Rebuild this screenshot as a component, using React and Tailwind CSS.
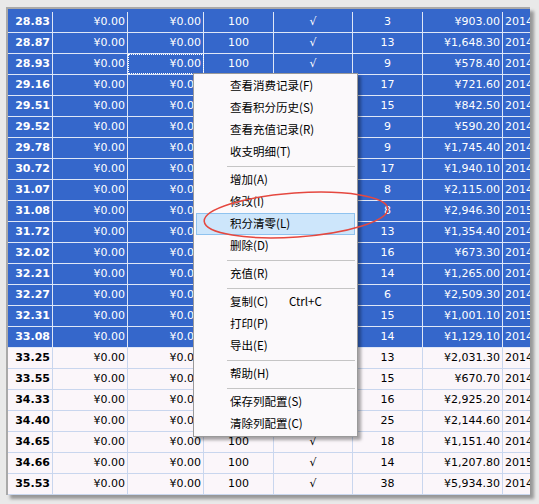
import React from "react";

const rows = [
  ["28.83", "3", "¥903.00", "2014", true],
  ["28.87", "13", "¥1,648.30", "2014", true],
  ["28.93", "9", "¥578.40", "2014", true],
  ["29.16", "17", "¥721.60", "2014", true],
  ["29.51", "15", "¥842.50", "2014", true],
  ["29.52", "9", "¥590.20", "2014", true],
  ["29.78", "9", "¥1,745.40", "2014", true],
  ["30.72", "17", "¥1,940.10", "2014", true],
  ["31.07", "8", "¥2,115.00", "2014", true],
  ["31.08", "8", "¥2,946.30", "2015", true],
  ["31.72", "13", "¥1,354.40", "2014", true],
  ["32.02", "16", "¥673.30", "2014", true],
  ["32.21", "14", "¥1,265.00", "2014", true],
  ["32.27", "6", "¥2,509.30", "2014", true],
  ["32.31", "15", "¥1,001.10", "2015", true],
  ["33.08", "14", "¥1,129.10", "2014", true],
  ["33.25", "13", "¥2,031.30", "2014", false],
  ["33.55", "15", "¥670.70", "2014", false],
  ["34.33", "16", "¥2,925.20", "2014", false],
  ["34.40", "25", "¥2,144.60", "2014", false],
  ["34.65", "18", "¥1,151.40", "2014", false],
  ["34.66", "14", "¥1,207.80", "2015", false],
  ["35.53", "38", "¥5,934.30", "2014", false],
];

const menu = [
  { t: "查看消费记录(F)" },
  { t: "查看积分历史(S)" },
  { t: "查看充值记录(R)" },
  { t: "收支明细(T)" },
  { sep: true },
  { t: "增加(A)" },
  { t: "修改(I)" },
  { t: "积分清零(L)", hl: true },
  { t: "删除(D)" },
  { sep: true },
  { t: "充值(R)" },
  { sep: true },
  { t: "复制(C)", k: "Ctrl+C" },
  { t: "打印(P)" },
  { t: "导出(E)" },
  { sep: true },
  { t: "帮助(H)" },
  { sep: true },
  { t: "保存列配置(S)" },
  { t: "清除列配置(C)" },
];

function Row({ r, i }) {
  const [a, n, amt, yr, sel] = r;
  const line = sel ? "border-[#dfe7f7]" : "border-[#c9d6ee]";
  const bg = sel ? "bg-[#3567cb] text-white" : "bg-[#fbf6fa] text-black";
  const h = i === 0 ? "h-[24px] pt-[3px]" : "h-[21px]";
  const cell = `border-r ${line} flex items-center h-full whitespace-nowrap overflow-hidden`;
  return (
    <div className={`flex border-b ${line} ${bg} ${h}`}>
      <div className={`${cell} w-[45px] justify-end pr-[2px] font-bold`}>{a}</div>
      <div className={`${cell} w-[75px] justify-end pr-[2px]`}>¥0.00</div>
      <div className={`${cell} w-[76px] justify-end pr-[2px] ${i === 2 ? "outline outline-1 outline-dotted outline-white -outline-offset-1" : ""}`}>¥0.00</div>
      <div className={`${cell} w-[70px] justify-center`}>100</div>
      <div className={`${cell} w-[79px] justify-center`}>√</div>
      <div className={`${cell} w-[70px] justify-center`}>{n}</div>
      <div className={`${cell} w-[80px] justify-end pr-[2px]`}>{amt}</div>
      <div className={`flex items-center h-full w-[27px] pl-[2px] overflow-hidden whitespace-nowrap`}>{yr}</div>
    </div>
  );
}

export default function App() {
  return (
    <div className="relative w-[539px] h-[504px] bg-[#e9e9e9] overflow-hidden">
      <div className="pl-[6px] pt-[7px]">
        <div
          className="w-[524px] border-l-2 border-t-2 border-[#a9a9a9] shadow-[4px_4px_3px_rgba(0,0,0,0.35)] overflow-hidden"
          style={{ fontFamily: '"DejaVu Sans", Verdana, sans-serif', fontSize: "11px" }}
        >
          {rows.map((r, i) => (
            <Row key={i} r={r} i={i} />
          ))}
        </div>
      </div>

      <div
        className="absolute left-[193px] top-[73px] w-[165px] bg-[#fbf9fb] border border-[#9a9a9a] p-px shadow-[3px_3px_3px_rgba(0,0,0,0.35)]"
        style={{ fontFamily: '"Noto Sans CJK SC", "Noto Sans", sans-serif', fontSize: "11.5px" }}
      >
        {menu.map((m, i) =>
          m.sep ? (
            <div key={i} className="h-[6px] flex items-center pl-[32px] pr-[1px]">
              <div className="h-px w-full bg-[#c5c5c5]" />
            </div>
          ) : (
            <div
              key={i}
              className={`h-[22px] mx-px flex items-center pl-[33px] text-black border ${
                m.hl ? "bg-[#cde6fb] border-[#8fc3ef]" : "border-transparent"
              }`}
            >
              <span className="w-[59px] whitespace-nowrap">{m.t}</span>
              {m.k && <span className="whitespace-nowrap">{m.k}</span>}
            </div>
          )
        )}
      </div>

      <svg className="absolute left-0 top-0 pointer-events-none" width="539" height="504">
        <ellipse
          cx="296"
          cy="215"
          rx="92"
          ry="22"
          transform="rotate(-4 296 215)"
          fill="none"
          stroke="#e5483f"
          strokeWidth="1.5"
        />
      </svg>
    </div>
  );
}
